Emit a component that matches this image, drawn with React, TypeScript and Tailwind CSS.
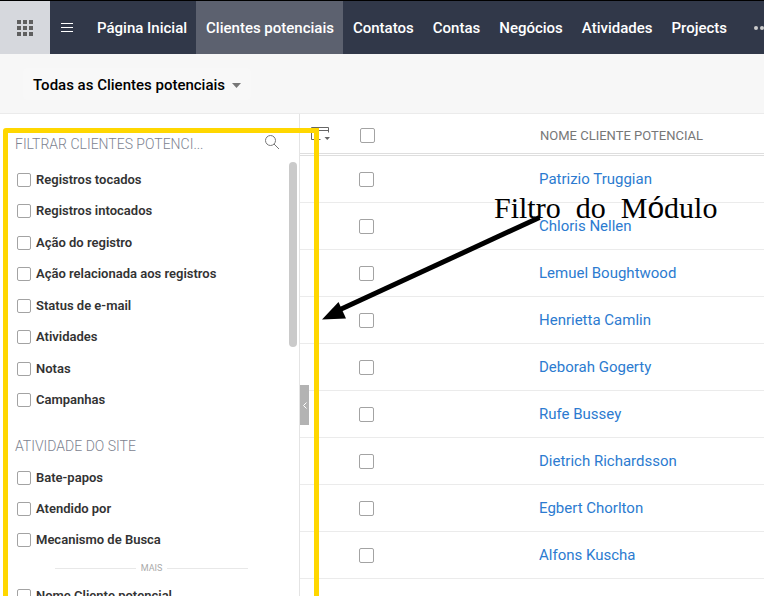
import { useState } from "react";

const TABS = [
  "Página Inicial",
  "Clientes potenciais",
  "Contatos",
  "Contas",
  "Negócios",
  "Atividades",
  "Projects",
];

const RECORD_FILTERS = [
  "Registros tocados",
  "Registros intocados",
  "Ação do registro",
  "Ação relacionada aos registros",
  "Status de e-mail",
  "Atividades",
  "Notas",
  "Campanhas",
];

const SITE_FILTERS = ["Bate-papos", "Atendido por", "Mecanismo de Busca"];

const LEADS = [
  "Patrizio Truggian",
  "Chloris Nellen",
  "Lemuel Boughtwood",
  "Henrietta Camlin",
  "Deborah Gogerty",
  "Rufe Bussey",
  "Dietrich Richardsson",
  "Egbert Chorlton",
  "Alfons Kuscha",
];

function AppsIcon() {
  return (
    <svg viewBox="0 0 16 16" className="h-4 w-4" fill="#5f5f5f" aria-hidden="true">
      {[0, 6, 12].map((y) =>
        [0, 6, 12].map((x) => <rect key={`${x}-${y}`} x={x} y={y} width="4" height="4" />)
      )}
    </svg>
  );
}

function MenuIcon() {
  return (
    <svg viewBox="0 0 12 10" className="h-[10px] w-3" fill="#fff" aria-hidden="true">
      <rect y="0" width="12" height="1" />
      <rect y="4" width="12" height="1" />
      <rect y="8" width="12" height="1" />
    </svg>
  );
}

function SearchIcon() {
  return (
    <svg viewBox="0 0 16 16" className="h-4 w-4" fill="none" stroke="#777" aria-hidden="true">
      <circle cx="6.5" cy="6.5" r="5" />
      <path d="M10 10l5 5" />
    </svg>
  );
}

function ColumnsIcon() {
  return (
    <svg viewBox="0 0 20 14" className="h-[14px] w-5" fill="none" stroke="#666" aria-hidden="true">
      <path d="M9.500 12.500H.5V.5h17v5M7 3.500h10.500" />
      <path d="M13.500 10h5.500l-2.750 3z" fill="#666" stroke="none" />
    </svg>
  );
}

const checkbox =
  "block shrink-0 appearance-none rounded-[2px] border border-[#a3a3a3] bg-white checked:bg-[#338cf0]";

function FilterList({ items }: { items: string[] }) {
  return (
    <ul className="grid auto-rows-fr">
      {items.map((item) => (
        <li key={item} className="flex items-center">
          <label className="flex items-center gap-[5px] text-[13px] leading-4 font-semibold text-[#333]">
            <input type="checkbox" className={`${checkbox} h-[14px] w-[14px]`} />
            {item}
          </label>
        </li>
      ))}
    </ul>
  );
}

function TopNav() {
  const [active, setActive] = useState("Clientes potenciais");

  return (
    <header className="flex h-[54px] shrink-0 overflow-hidden border-t border-black bg-[#313849] text-white">
      <button
        type="button"
        aria-label="Aplicativos"
        className="flex w-[50px] shrink-0 items-center justify-center bg-[#d6d8dd]"
      >
        <AppsIcon />
      </button>
      <button
        type="button"
        aria-label="Menu"
        className="flex w-[37px] shrink-0 items-center pl-[11px]"
      >
        <MenuIcon />
      </button>
      <nav className="flex">
        {TABS.map((tab) => (
          <a
            key={tab}
            href="#"
            onClick={() => setActive(tab)}
            className={`flex items-center pt-[2px] pr-[9px] pl-[10px] text-[15px] font-medium whitespace-nowrap ${
              tab === active ? "bg-[#5c616f]" : ""
            }`}
          >
            {tab}
          </a>
        ))}
      </nav>
      <button type="button" aria-label="Mais módulos" className="shrink-0 pl-[18px]">
        <svg viewBox="0 0 16 4" className="h-1 w-4" fill="#ccc" aria-hidden="true">
          <circle cx="2" cy="2" r="2" />
          <circle cx="8" cy="2" r="2" />
          <circle cx="14" cy="2" r="2" />
        </svg>
      </button>
    </header>
  );
}

function Sidebar() {
  return (
    <aside className="relative w-[300px] shrink-0 border-r border-[#e4e4e4] pl-[15px]">
      <div className="flex h-[50px] items-end justify-between pr-[19px] pb-3">
        <h2 className="text-[14px] leading-4 font-light text-[#7d8390]">FILTRAR CLIENTES POTENCI...</h2>
        <button type="button" aria-label="Pesquisar filtros" className="pb-[2px]">
          <SearchIcon />
        </button>
      </div>
      <div className="grid h-[252px] pl-[2px]">
        <FilterList items={RECORD_FILTERS} />
      </div>
      <h2 className="pt-[22px] pb-2 text-[14px] leading-4 font-light text-[#7d8390]">
        ATIVIDADE DO SITE
      </h2>
      <div className="grid h-[94px] pl-[2px]">
        <FilterList items={SITE_FILTERS} />
      </div>
      <div className="mr-[51px] ml-10 flex h-6 items-center gap-[5px] text-[9px] text-[#aaa]">
        <span className="h-px flex-1 bg-[#e8e8e8]" />
        <span className="pt-[2px]">MAIS</span>
        <span className="h-px flex-1 bg-[#e8e8e8]" />
      </div>
      <div className="grid h-8 pl-[2px]">
        <FilterList items={["Nome Cliente potencial"]} />
      </div>

      <div className="absolute top-12 right-[2px] h-[185px] w-2 rounded-full bg-[#cacaca]" />
      <button
        type="button"
        aria-label="Recolher filtros"
        className="absolute top-[271px] -right-[10px] z-10 flex h-10 w-[9px] items-center justify-center bg-[#b3b3b3]"
      >
        <svg viewBox="0 0 4 7" className="h-[7px] w-1" fill="none" stroke="#fff" aria-hidden="true">
          <path d="M3.500.5l-3 3 3 3" />
        </svg>
      </button>
      {/* highlight around the filter panel */}
      <div className="pointer-events-none absolute top-[14px] -right-[20px] left-[3px] z-20 h-screen rounded-tl-[3px] border-[5px] border-[#ffd700]" />
    </aside>
  );
}

function LeadsTable() {
  return (
    <table className="w-full table-fixed border-separate border-spacing-0 self-start text-left">
      <thead>
        <tr className="h-[42px]">
          <th className="w-[59px] border-b-[3px] border-double border-[#dedede] p-0 align-top">
            <button type="button" aria-label="Gerenciar colunas" className="mt-[13px] ml-[11px] block">
              <ColumnsIcon />
            </button>
          </th>
          <th className="w-[180px] border-b-[3px] border-double border-[#dedede] p-0 pt-1">
            <input
              type="checkbox"
              aria-label="Selecionar todos"
              className={`${checkbox} ml-px h-[15px] w-[15px]`}
            />
          </th>
          <th className="border-b-[3px] border-double border-[#dedede] p-0 pt-1 pl-px text-[13px] font-normal text-[#777]">
            NOME CLIENTE POTENCIAL
          </th>
        </tr>
      </thead>
      <tbody>
        {LEADS.map((lead) => (
          <tr key={lead} className="h-[47px]">
            <td className="border-b border-[#ebebeb] p-0" />
            <td className="border-b border-[#ebebeb] p-0 pt-px">
              <input
                type="checkbox"
                aria-label={`Selecionar ${lead}`}
                className={`${checkbox} h-[15px] w-[15px]`}
              />
            </td>
            <td className="border-b border-[#ebebeb] p-0 text-[15px] text-[#2c7bd0]">
              <a href="#">{lead}</a>
            </td>
          </tr>
        ))}
        <tr className="h-[47px]">
          <td className="p-0" />
          <td className="p-0 pt-px">
            <input
              type="checkbox"
              aria-label="Selecionar registro"
              className={`${checkbox} h-[15px] w-[15px]`}
            />
          </td>
          <td className="p-0" />
        </tr>
      </tbody>
    </table>
  );
}

function Callout() {
  return (
    <div className="pointer-events-none absolute top-[190px] left-[320px] z-30">
      <svg viewBox="0 0 222 132" className="h-[132px] w-[222px]" aria-hidden="true">
        <path d="M219.500 27.500L18 120.500" stroke="#000" strokeWidth="5" fill="none" />
        <path d="M2 129.500L18.500 112l7.500 16.500z" />
      </svg>
      <p className="absolute top-0 left-[174px] font-['Liberation_Serif',serif] text-[30px] leading-9 whitespace-pre text-black">
        Filtro{"  "}do{"  "}M<span className="font-['Liberation_Sans',sans-serif]">ó</span>dulo
      </p>
    </div>
  );
}

export default function App() {
  return (
    <div className="relative flex h-screen flex-col overflow-hidden bg-white font-['Roboto',sans-serif]">
      <TopNav />
      <div className="flex h-[60px] shrink-0 items-center border-b border-[#ebebeb] bg-[#f7f7f7] pl-[23px]">
        <button
          type="button"
          className="flex h-8 items-center gap-[7px] rounded-sm bg-[#f8f8f8] px-[10px] pt-[3px] text-[15px] font-medium text-black"
        >
          Todas as Clientes potenciais
          <svg viewBox="0 0 9 5" className="h-[5px] w-[9px]" fill="#777" aria-hidden="true">
            <path d="M0 0h9L4.500 5z" />
          </svg>
        </button>
      </div>
      <main className="flex min-h-0 flex-1">
        <Sidebar />
        <LeadsTable />
      </main>
      <Callout />
    </div>
  );
}
